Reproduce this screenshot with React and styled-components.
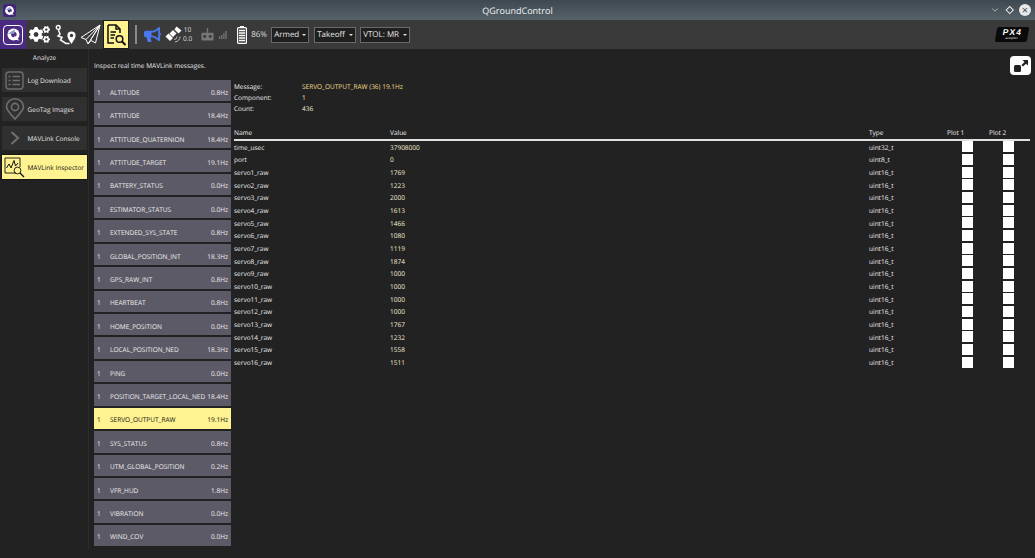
import React from 'react';
import styled, { createGlobalStyle } from 'styled-components';
import { FaCogs, FaBullhorn } from 'react-icons/fa';
import { ChevronDown } from 'lucide-react';

const Global = createGlobalStyle`
  html, body { margin: 0; padding: 0; background: #222222; }
  body {
    font-family: "Open Sans", "Liberation Sans", sans-serif;
    text-rendering: geometricPrecision;
    overflow: hidden;
  }
  * { box-sizing: border-box; }
`;

const Page = styled.div`
  width: 1035px;
  height: 558px;
  display: flex;
  flex-direction: column;
  background: #222222;
  color: #eeeeee;
  font-size: 6.5px;
  white-space: nowrap;
  overflow: hidden;
`;

const TitleBar = styled.div`
  height: 20px;
  flex: none;
  display: flex;
  align-items: center;
  position: relative;
  padding: 0 4px 0 3px;
  background: linear-gradient(180deg, #3e4850, #56626a);
`;

const AppBadge = styled.div`
  width: 13px;
  height: 13px;
  border-radius: 3px;
  background: #41267a;
  display: grid;
  place-items: center;
`;

const Title = styled.div`
  position: absolute;
  left: 0;
  right: 0;
  text-align: center;
  font-size: 9px;
  color: #f2f4f5;
`;

const WindowButtons = styled.div`
  margin-left: auto;
  display: flex;
  align-items: center;
  gap: 7px;
  color: #f0f0f0;
`;

const Diamond = styled.div`
  width: 5.5px;
  height: 5.5px;
  border: 1px solid #f0f0f0;
  transform: rotate(45deg);
`;

const CloseButton = styled.div`
  width: 12px;
  height: 12px;
  border-radius: 50%;
  background: #e8e8e8;
  color: #3e4850;
  display: grid;
  place-items: center;
  font-size: 11px;
  line-height: 1;
`;

const Toolbar = styled.div`
  height: 29px;
  flex: none;
  display: flex;
  align-items: center;
  background: #3a3a3a;
`;

const ToolButton = styled.div`
  width: ${p => p.$w || 26}px;
  height: 29px;
  flex: none;
  display: grid;
  place-items: center;
  color: #ffffff;
  background: ${p => (p.$active ? '#fff291' : 'transparent')};
  border: ${p => (p.$active ? '1px solid #1c1c1c' : 'none')};
`;

const LogoCell = styled(ToolButton)`
  background: #4a2a80;
`;

const LogoFrame = styled.div`
  width: 20px;
  height: 20px;
  border: 1.5px solid #ffffff;
  border-radius: 4px;
  display: grid;
  place-items: center;
`;

const Separator = styled.div`
  width: 2px;
  height: 19px;
  margin: 0 7px 0 6px;
  background: #8a8a8a;
`;

const Spacer = styled.div`
  width: ${p => p.$w}px;
  flex: none;
`;

const Gps = styled.div`
  display: flex;
  flex-direction: column;
  font-size: 6.5px;
  line-height: 8.5px;
  text-align: center;
  color: #dddddd;
  margin-left: 1px;
`;

const Percent = styled.span`
  width: 20px;
  flex: none;
  font-size: 8px;
  color: #dddddd;
  margin-left: 4px;
`;

const Dropdown = styled.div`
  height: 16px;
  width: ${p => p.$w}px;
  flex: none;
  display: flex;
  align-items: center;
  justify-content: space-between;
  padding: 0 2px 0 2px;
  margin-left: ${p => p.$gap}px;
  background: #1f1f1f;
  border: 1px solid #6a6a6a;
  font-size: 8px;
  color: #e6e6e6;
`;

const Caret = styled.span`
  width: 0;
  height: 0;
  border-left: 2px solid transparent;
  border-right: 2px solid transparent;
  border-top: 2px solid #e6e6e6;
`;

const Px4 = styled.div`
  margin-left: auto;
  margin-right: 7px;
  width: 32px;
  height: 15px;
  background: #0a0a0a;
  border-radius: 2px;
  display: flex;
  flex-direction: column;
  align-items: center;
  justify-content: center;
  color: #ffffff;
  transform: skewX(-10deg);
`;

const Px4Mark = styled.span`
  font-family: "Liberation Sans", sans-serif;
  font-size: 8.5px;
  font-weight: bold;
  line-height: 7.5px;
  letter-spacing: 1px;
`;

const Px4Sub = styled.span`
  font-size: 3px;
  line-height: 4px;
`;

const Body = styled.div`
  flex: 1;
  display: flex;
  min-height: 0;
`;

const Side = styled.div`
  width: 89px;
  flex: none;
  height: 500px;
  padding: 0 1px 0 2px;
  border-right: 1px solid #2c2c2c;
  display: flex;
  flex-direction: column;
`;

const SideTitle = styled.div`
  height: 19px;
  line-height: 18px;
  text-align: center;
  color: #e0e0e0;
`;

const SideList = styled.div`
  display: flex;
  flex-direction: column;
  gap: 4.6px;
`;

const SideItem = styled.div`
  height: 24.4px;
  display: flex;
  align-items: center;
  background: ${p => (p.$active ? '#fff291' : '#303030')};
  color: ${p => (p.$active ? '#111111' : '#e4e4e4')};
  ${p => p.$active && 'box-shadow: 0 0 0 1px #161616;'}
`;

const SideIcon = styled.div`
  width: 25.5px;
  flex: none;
  display: grid;
  place-items: center;
`;

const Main = styled.div`
  flex: 1;
  min-width: 0;
  padding: 10px 5px 0 5px;
  position: relative;
`;

const Intro = styled.div`
  height: 21px;
  line-height: 14px;
  color: #e8e8e8;
`;

const Columns = styled.div`
  display: flex;
  gap: 3px;
`;

const MessageList = styled.div`
  width: 137px;
  flex: none;
  display: flex;
  flex-direction: column;
  gap: 2px;
`;

const MessageRow = styled.div`
  height: 21.42px;
  display: flex;
  align-items: center;
  padding: 3px 3px 0 3px;
  background: ${p => (p.$selected ? '#fff291' : '#5c5a66')};
  color: ${p => (p.$selected ? '#111111' : '#ececec')};
`;

const MsgComp = styled.span`
  width: 13px;
  flex: none;
`;

const MsgName = styled.span`
  flex: 1;
`;

const Details = styled.div`
  flex: 1;
  min-width: 0;
`;

const Summary = styled.div`
  display: grid;
  grid-template-columns: 68px 1fr;
  grid-auto-rows: 11px;
  height: 46px;
  padding-top: 1px;
  line-height: 11px;
`;

const Accent = styled.span`
  color: #f5dd8c;
`;

const Plain = styled.span`
  color: #f3ecd2;
`;

const FieldGrid = styled.div`
  display: grid;
  grid-template-columns: 156px 479px 78px 42px 41px;
`;

const HeadCell = styled.div`
  height: 14.6px;
  line-height: 13.6px;
  border-bottom: 2px solid #e0e0e0;
`;

const Cell = styled.div`
  height: 12.66px;
  padding-top: 1.2px;
  line-height: 12.66px;
  color: ${p => (p.$value ? '#f3ecd2' : '#eeeeee')};
`;

const Check = styled.div`
  width: 11px;
  height: 11px;
  align-self: center;
  margin-left: ${p => p.$offset}px;
  background: #ffffff;
`;

const PopOut = styled.div`
  position: absolute;
  top: 7px;
  right: 4px;
  width: 21px;
  height: 19px;
  border-radius: 4px;
  background: #ffffff;
  display: grid;
  place-items: center;
`;

const messages = [
  ['ALTITUDE', '0.8Hz'],
  ['ATTITUDE', '18.4Hz'],
  ['ATTITUDE_QUATERNION', '18.4Hz'],
  ['ATTITUDE_TARGET', '19.1Hz'],
  ['BATTERY_STATUS', '0.0Hz'],
  ['ESTIMATOR_STATUS', '0.0Hz'],
  ['EXTENDED_SYS_STATE', '0.8Hz'],
  ['GLOBAL_POSITION_INT', '18.3Hz'],
  ['GPS_RAW_INT', '0.8Hz'],
  ['HEARTBEAT', '0.8Hz'],
  ['HOME_POSITION', '0.0Hz'],
  ['LOCAL_POSITION_NED', '18.3Hz'],
  ['PING', '0.0Hz'],
  ['POSITION_TARGET_LOCAL_NED', '18.4Hz'],
  ['SERVO_OUTPUT_RAW', '19.1Hz'],
  ['SYS_STATUS', '0.8Hz'],
  ['UTM_GLOBAL_POSITION', '0.2Hz'],
  ['VFR_HUD', '1.8Hz'],
  ['VIBRATION', '0.0Hz'],
  ['WIND_COV', '0.0Hz'],
];

const fields = [
  ['time_usec', '37908000', 'uint32_t'],
  ['port', '0', 'uint8_t'],
  ['servo1_raw', '1769', 'uint16_t'],
  ['servo2_raw', '1223', 'uint16_t'],
  ['servo3_raw', '2000', 'uint16_t'],
  ['servo4_raw', '1613', 'uint16_t'],
  ['servo5_raw', '1466', 'uint16_t'],
  ['servo6_raw', '1080', 'uint16_t'],
  ['servo7_raw', '1119', 'uint16_t'],
  ['servo8_raw', '1874', 'uint16_t'],
  ['servo9_raw', '1000', 'uint16_t'],
  ['servo10_raw', '1000', 'uint16_t'],
  ['servo11_raw', '1000', 'uint16_t'],
  ['servo12_raw', '1000', 'uint16_t'],
  ['servo13_raw', '1767', 'uint16_t'],
  ['servo14_raw', '1232', 'uint16_t'],
  ['servo15_raw', '1558', 'uint16_t'],
  ['servo16_raw', '1511', 'uint16_t'],
];

const QLogo = ({ size, hole = '#4a2a80' }) => (
  <svg width={size} height={size} viewBox="0 0 20 20">
    <circle cx="10" cy="10" r="8" fill="#fff" />
    <circle cx="10.5" cy="10" r="3.6" fill={hole} />
    <path d="M2 9 L12 3 L11 9 Z" fill="#8fa0c8" />
    <path d="M11 11 L18 18 L12 17 Z" fill="#fff" />
  </svg>
);

const PlanIcon = () => (
  <svg width="22" height="22" viewBox="0 0 22 22" fill="none" stroke="#fff" strokeWidth="1.4">
    <circle cx="3.2" cy="3.4" r="1.9" />
    <path d="M3.4 6 L5 10 L3 12 L7 13.5 L5.5 16 L11 19.5 L14.5 19.5" strokeWidth="1.5" />
    <path d="M16.5 20 C14 16 12.4 14 12.4 11.5 a4.1 4.1 0 0 1 8.2 0 C20.6 14 19 16 16.5 20 Z" fill="#fff" stroke="none" />
    <circle cx="16.5" cy="11.5" r="1.7" fill="#3a3a3a" stroke="none" />
  </svg>
);

const PlaneIcon = () => (
  <svg width="21" height="21" viewBox="0 0 21 21" fill="none" stroke="#fff" strokeWidth="1" strokeLinejoin="round">
    <path d="M20 1 L1 13.5 L6 15.5 L8 20 L11 16.5 L15.5 19 Z" />
    <path d="M20 1 L6 15.5 M20 1 L8 20 M20 1 L10.5 16.2" />
  </svg>
);

const AnalyzeIcon = () => (
  <svg width="22" height="24" viewBox="0 0 22 24" fill="none" stroke="#111" strokeWidth="1.5">
    <path d="M3 2 H11 L15 6 V10 M3 2 V20 H9" />
    <path d="M11 2 V6 H15" />
    <path d="M5.5 9 H11 M5.5 12 H10 M5.5 15 H9" />
    <circle cx="14.5" cy="16" r="3.3" />
    <path d="M17 18.5 L20.5 22" strokeWidth="2" />
  </svg>
);

const SatelliteIcon = () => (
  <svg width="17" height="17" viewBox="0 0 17 17" fill="#fff">
    <path d="M11.5 0.5 L16.5 4.5 L13.5 7.5 L9.5 3.5 Z" />
    <path d="M3.5 7.5 L8 12 L5 15 L0.5 10.5 Z" />
    <rect x="5.5" y="5" width="5" height="5" transform="rotate(45 8 7.5)" />
    <path d="M9 13.5 a3 3 0 0 0 3 -3 M10 16 a5.5 5.5 0 0 0 5 -5.5" fill="none" stroke="#bbb" strokeWidth="1" />
  </svg>
);

const RemoteIcon = () => (
  <svg width="13" height="13" viewBox="0 0 14 14">
    <rect x="6.3" y="0" width="1.4" height="6" fill="#777" />
    <rect x="0.5" y="5" width="13" height="8.5" rx="1" fill="#777" />
    <circle cx="4" cy="9.2" r="1.6" fill="#3a3a3a" />
    <circle cx="10" cy="9.2" r="1.6" fill="#3a3a3a" />
  </svg>
);

const SignalIcon = () => (
  <svg width="8" height="8" viewBox="0 0 9 9" fill="#777">
    <rect x="0" y="6" width="1.4" height="3" />
    <rect x="2.4" y="4.5" width="1.4" height="4.5" />
    <rect x="4.8" y="2.5" width="1.4" height="6.5" />
    <rect x="7.2" y="0" width="1.4" height="9" />
  </svg>
);

const BatteryIcon = () => (
  <svg width="10" height="18" viewBox="0 0 10 18">
    <rect x="3" y="0" width="4" height="2" fill="#fff" />
    <rect x="0.6" y="1.6" width="8.8" height="15.8" rx="1" fill="none" stroke="#fff" strokeWidth="1.2" />
    <path d="M2 4.5 H8 M2 7 H8 M2 9.5 H8 M2 12 H8 M2 14.5 H8" stroke="#fff" strokeWidth="1.4" />
  </svg>
);

const ListIcon = () => (
  <svg width="19" height="19" viewBox="0 0 19 19" fill="none" stroke="#6e6e6e" strokeWidth="1.4">
    <rect x="1" y="1" width="17" height="17" rx="3" />
    <path d="M7.5 5.5 H15 M7.5 9.5 H15 M7.5 13.5 H15" />
    <path d="M3.5 5.5 H5.5 M3.5 9.5 H5.5 M3.5 13.5 H5.5" />
  </svg>
);

const PinIcon = () => (
  <svg width="20" height="22" viewBox="0 0 20 22" fill="none" stroke="#6e6e6e" strokeWidth="1.6">
    <path d="M10 21 C5 15 1.5 12.5 1.5 8.8 a8.5 8 0 0 1 17 0 C18.5 12.5 15 15 10 21 Z" />
    <circle cx="10" cy="9" r="3.6" />
  </svg>
);

const ChevronIcon = () => (
  <svg width="10" height="14" viewBox="0 0 10 14" fill="none" stroke="#6e6e6e" strokeWidth="2.2">
    <path d="M1.5 1 L8 7 L1.5 13" />
  </svg>
);

const InspectorIcon = () => (
  <svg width="21" height="21" viewBox="0 0 21 21" fill="none" stroke="#111" strokeWidth="0.9">
    <path d="M12 16 H1 V1 H16 V10" />
    <path d="M2.5 11 L5 7 L7 11 L10 3.5 L11.5 9 L14 6" strokeWidth="1" />
    <circle cx="13.5" cy="13.5" r="3.4" />
    <path d="M16 16 L20 20" strokeWidth="1.2" />
  </svg>
);

const PopOutIcon = () => (
  <svg width="14" height="12" viewBox="0 0 14 12" fill="#222">
    <rect x="0" y="5" width="7" height="7" rx="1.5" />
    <path d="M8.5 0 H14 V5.5 L12 3.8 L9 6.5 L7.5 5 L10.5 2 Z" />
  </svg>
);

export default function App() {
  return (
    <Page>
      <Global />
      <TitleBar>
        <AppBadge><QLogo size={11} hole="#41267a" /></AppBadge>
        <Title>QGroundControl</Title>
        <WindowButtons>
          <ChevronDown size={10} strokeWidth={1.5} />
          <Diamond />
          <CloseButton>×</CloseButton>
        </WindowButtons>
      </TitleBar>
      <Toolbar>
        <LogoCell><LogoFrame><QLogo size={15} /></LogoFrame></LogoCell>
        <ToolButton $w={27}><FaCogs size={21} /></ToolButton>
        <ToolButton $w={25}><PlanIcon /></ToolButton>
        <ToolButton $w={25}><PlaneIcon /></ToolButton>
        <ToolButton $active><AnalyzeIcon /></ToolButton>
        <Separator />
        <FaBullhorn size={17} color="#4a78ee" />
        <Spacer $w={4} />
        <SatelliteIcon />
        <Gps><span>10</span><span>0.0</span></Gps>
        <Spacer $w={9} />
        <RemoteIcon />
        <Spacer $w={5} />
        <SignalIcon />
        <Spacer $w={10} />
        <BatteryIcon />
        <Percent>86%</Percent>
        <Dropdown $gap={0} $w={38}>Armed<Caret /></Dropdown>
        <Dropdown $gap={5} $w={42}>Takeoff<Caret /></Dropdown>
        <Dropdown $gap={4} $w={50}>VTOL: MR<Caret /></Dropdown>
        <Px4><Px4Mark>PX4</Px4Mark><Px4Sub>autopilot</Px4Sub></Px4>
      </Toolbar>
      <Body>
        <Side>
          <SideTitle>Analyze</SideTitle>
          <SideList>
            <SideItem><SideIcon><ListIcon /></SideIcon>Log Download</SideItem>
            <SideItem><SideIcon><PinIcon /></SideIcon>GeoTag Images</SideItem>
            <SideItem><SideIcon><ChevronIcon /></SideIcon>MAVLink Console</SideItem>
            <SideItem $active><SideIcon><InspectorIcon /></SideIcon>MAVLink Inspector</SideItem>
          </SideList>
        </Side>
        <Main>
          <Intro>Inspect real time MAVLink messages.</Intro>
          <PopOut><PopOutIcon /></PopOut>
          <Columns>
            <MessageList>
              {messages.map(([name, rate]) => (
                <MessageRow key={name} $selected={name === 'SERVO_OUTPUT_RAW'}>
                  <MsgComp>1</MsgComp>
                  <MsgName>{name}</MsgName>
                  <span>{rate}</span>
                </MessageRow>
              ))}
            </MessageList>
            <Details>
              <Summary>
                <span>Message:</span><Accent>SERVO_OUTPUT_RAW (36) 19.1Hz</Accent>
                <span>Component:</span><Plain>1</Plain>
                <span>Count:</span><Plain>436</Plain>
              </Summary>
              <FieldGrid>
                <HeadCell>Name</HeadCell>
                <HeadCell>Value</HeadCell>
                <HeadCell>Type</HeadCell>
                <HeadCell>Plot 1</HeadCell>
                <HeadCell>Plot 2</HeadCell>
                {fields.map(([name, value, type]) => (
                  <React.Fragment key={name}>
                    <Cell>{name}</Cell>
                    <Cell $value>{value}</Cell>
                    <Cell>{type}</Cell>
                    <Check $offset={15} />
                    <Check $offset={14} />
                  </React.Fragment>
                ))}
              </FieldGrid>
            </Details>
          </Columns>
        </Main>
      </Body>
    </Page>
  );
}
